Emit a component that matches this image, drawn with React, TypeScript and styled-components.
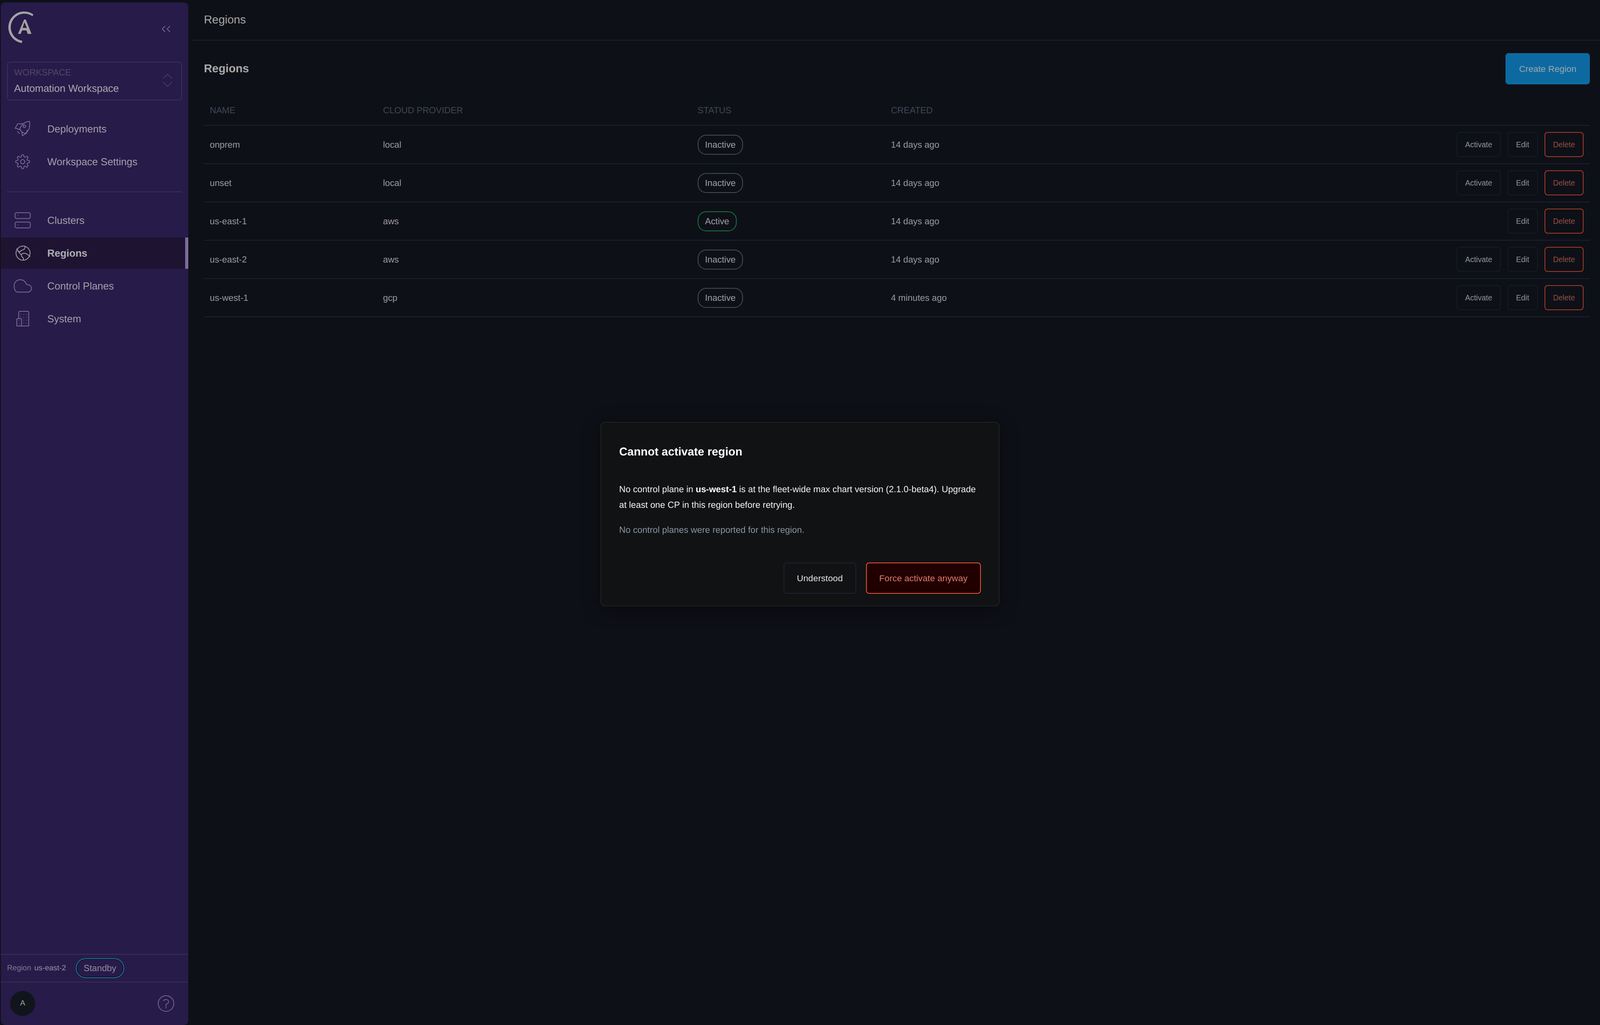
import React from "react";
import styled, { createGlobalStyle } from "styled-components";

const GlobalStyle = createGlobalStyle`
  html, body { margin: 0; padding: 0; height: 100%; background: #0e1017; }
  body {
    font-family: "Liberation Sans", Arial, sans-serif;
    font-size: 26px;
    text-rendering: geometricPrecision;
    overflow: hidden;
  }
  * { box-sizing: border-box; }
`;

const Shell = styled.div`
  display: flex;
  height: 100vh;
  background: #0e1017;
`;

const Sidebar = styled.aside`
  flex: 0 0 480px;
  margin: 6px 0 0 2px;
  border-radius: 12px;
  background: #271b49;
  display: flex;
  flex-direction: column;
`;

const LogoRow = styled.div`
  height: 152px;
  padding: 22px 42px 0 16px;
  display: flex;
  justify-content: space-between;
  align-items: flex-start;
`;

const CollapseIcon = styled.svg`
  margin-top: 34px;
  fill: none;
  stroke: #75659a;
  stroke-width: 2;
`;

const WorkspaceBox = styled.div`
  height: 99px;
  margin: 0 16px;
  padding: 12px 23px 0 16px;
  border: 2px solid #3b2e5a;
  border-radius: 8px;
  display: flex;
  justify-content: space-between;
  align-items: flex-start;
`;

const WorkspaceText = styled.div`
  display: flex;
  flex-direction: column;
  gap: 11px;
`;

const WorkspaceLabel = styled.span`
  font-size: 22.75px;
  line-height: 26px;
  color: #504666;
  text-transform: uppercase;
`;

const WorkspaceName = styled.span`
  font-size: 26px;
  line-height: 34px;
  color: #a9a5ae;
`;

const CaretIcon = styled.svg`
  margin-top: 17px;
  fill: none;
  stroke: #473b65;
  stroke-width: 2;
`;

const NavGroup = styled.nav<{ $top: number }>`
  margin-top: ${(p) => p.$top}px;
  display: flex;
  flex-direction: column;
  gap: 4px;
`;

const NavItem = styled.a<{ $active?: boolean }>`
  position: relative;
  height: 80px;
  padding-left: 32px;
  display: flex;
  align-items: center;
  gap: 39px;
  font-size: 26px;
  font-weight: ${(p) => (p.$active ? 700 : 400)};
  color: ${(p) => (p.$active ? "#aeabb2" : "#a09ca8")};
  background: ${(p) => (p.$active ? "#1e1432" : "transparent")};
  ${(p) =>
    p.$active &&
    `&::after {
      content: "";
      position: absolute;
      top: 0;
      right: 0;
      bottom: 0;
      width: 8px;
      background: #7c6c9c;
    }`}
`;

const NavIcon = styled.svg<{ $active?: boolean }>`
  flex: 0 0 48px;
  fill: none;
  stroke: ${(p) => (p.$active ? "#a09ca8" : "#7a6a9b")};
  stroke-width: 2;
  stroke-linecap: round;
  stroke-linejoin: round;
`;

const Dot = styled.circle`
  fill: #7a6a9b;
  stroke: none;
`;

const Divider = styled.hr`
  height: 2px;
  margin: 36px 16px 0;
  border: 0;
  background: #3b2e5a;
`;

const SidebarFooter = styled.div`
  margin-top: auto;
  display: flex;
  flex-direction: column;
`;

const RegionRow = styled.div`
  height: 71px;
  padding-left: 16px;
  border-top: 2px solid #3b2e5a;
  display: flex;
  align-items: center;
  font-size: 19.5px;
`;

const RegionLabel = styled.span`
  color: #7e7590;
  margin-right: 8px;
`;

const RegionValue = styled.span`
  color: #96919f;
  margin-right: 25px;
`;

const StandbyPill = styled.span`
  height: 51px;
  padding: 0 18px;
  border: 2px solid #18749f;
  border-radius: 26px;
  box-shadow: inset 0 0 0 2px #13131f;
  display: inline-flex;
  align-items: center;
  font-size: 22.75px;
  color: #8f8a9b;
`;

const UserRow = styled.div`
  height: 111px;
  padding: 0 33px 2px 24px;
  border-top: 2px solid #3b2e5a;
  display: flex;
  justify-content: space-between;
  align-items: center;
`;

const Avatar = styled.div`
  width: 64px;
  height: 64px;
  border-radius: 50%;
  background: #10151b;
  color: #a3a3a3;
  font-size: 19.5px;
  display: flex;
  align-items: center;
  justify-content: center;
`;

const HelpIcon = styled.svg`
  fill: none;
  stroke: #75659a;
  stroke-width: 2;
  stroke-linecap: round;
`;

const Main = styled.main`
  flex: 1;
  min-width: 0;
  margin-left: 8px;
  display: flex;
  flex-direction: column;
`;

const TopBar = styled.header`
  height: 104px;
  padding: 0 32px;
  border-bottom: 2px solid #1b222e;
  display: flex;
  align-items: center;
  font-size: 29.25px;
  color: #a7a7a7;
`;

const Content = styled.section`
  padding: 32px 26px 0 32px;
`;

const TitleRow = styled.div`
  display: flex;
  justify-content: space-between;
  align-items: center;
  margin-bottom: 28px;
`;

const PageTitle = styled.h1`
  margin: 0;
  font-size: 29.25px;
  font-weight: 700;
  color: #a8a8a8;
`;

const PrimaryButton = styled.button`
  width: 216px;
  height: 80px;
  border: 0;
  border-radius: 8px;
  background: #0d6aa1;
  color: #9aa5ad;
  font: inherit;
  font-size: 22.75px;
`;

/* Column shares are the reference's 570 / 1035 / 636 / 2319 px of its 4560 px table,
   so they land on the same pixels in a 5108 px window and scale in a narrower one. */
const TableRow = styled.div<{ $head?: boolean }>`
  height: ${(p) => (p.$head ? 78 : 98)}px;
  border-bottom: 2px solid #1b222e;
  display: grid;
  grid-template-columns: minmax(0, 570fr) minmax(0, 1035fr) minmax(0, 636fr) minmax(0, 2319fr);
  align-items: center;
  font-size: 22.75px;
  color: ${(p) => (p.$head ? "#3e4653" : "#97979b")};
`;

const TableCell = styled.div`
  padding-left: 15px;
`;

const CreatedCell = styled.div`
  padding: 0 16px 0 15px;
  display: flex;
  align-items: center;
  justify-content: space-between;
`;

const Badge = styled.span<{ $active: boolean }>`
  height: 51px;
  padding: 0 17px;
  border: 2px solid ${(p) => (p.$active ? "#14793f" : "#454c58")};
  border-radius: 22px;
  display: inline-flex;
  align-items: center;
  color: #9a9da3;
`;

const Actions = styled.div`
  display: flex;
  gap: 17px;
`;

const RowButton = styled.button<{ $danger?: boolean }>`
  height: 64px;
  padding: 0 20px;
  border: 2px solid ${(p) => (p.$danger ? "#a33b2b" : "#141c24")};
  border-radius: 8px;
  background: transparent;
  color: ${(p) => (p.$danger ? "#8e4f45" : "#8e9094")};
  font: inherit;
  font-size: 19.5px;
`;

const Overlay = styled.div`
  position: fixed;
  inset: 0;
  padding-top: 8px;
  display: flex;
  align-items: center;
  justify-content: center;
`;

const Dialog = styled.div`
  width: 1022px;
  height: 472px;
  padding: 46px 46px 30px;
  border: 2px solid #1e2226;
  border-radius: 12px;
  background: #111213;
  box-shadow: 0 8px 48px rgba(0, 0, 0, 0.45);
  display: flex;
  flex-direction: column;
`;

const DialogTitle = styled.h2`
  margin: 0 0 47px;
  font-size: 29.25px;
  line-height: 58px;
  font-weight: 700;
  color: #fff;
`;

const DialogText = styled.p<{ $muted?: boolean }>`
  margin: 0 0 24px;
  font-size: 22.75px;
  line-height: 39.8px;
  color: ${(p) => (p.$muted ? "#8b95a5" : "#f2f2f2")};
  b { font-weight: 700; color: #fff; }
`;

const DialogActions = styled.div`
  margin-top: auto;
  display: flex;
  justify-content: flex-end;
  gap: 25px;
`;

const DialogButton = styled.button<{ $danger?: boolean }>`
  height: 80px;
  padding: 0 32px;
  border: 2px solid ${(p) => (p.$danger ? "#e9523e" : "#1b2230")};
  border-radius: 8px;
  background: ${(p) => (p.$danger ? "#210000" : "transparent")};
  color: ${(p) => (p.$danger ? "#e37b6e" : "#e2e2e2")};
  font: inherit;
  font-size: 22.75px;
`;

const gearPath = (() => {
  const pts: string[] = [];
  const n = 160;
  for (let i = 0; i < n; i++) {
    const t = (i / n) * Math.PI * 2;
    const r = 15.3 + 2.6 * Math.tanh(2.2 * Math.cos(8 * t));
    const x = 24 + r * Math.sin(t);
    const y = 24 - r * Math.cos(t);
    pts.push(`${x.toFixed(2)} ${y.toFixed(2)}`);
  }
  return `M${pts.join("L")}Z`;
})();

const RocketIcon = () => (
  <NavIcon width="48" height="48" viewBox="0 0 48 48">
    <path d="M41.7 4.7C35 5 30 7 26 10.7C21.5 15 18.5 19 17 23.3C17.5 26.5 19 29 21.7 31.3C24.5 33.5 27 35 30.3 35.7C34.5 33.5 38 29 41 22.3C42.5 16 42.5 10 41.7 4.7Z" />
    <path d="M26 10.7L11 11.3L5 22.3L17 25.7" />
    <path d="M22 32L23.3 41.3L34.3 34.7L35.3 27" />
    <circle cx="28.3" cy="17.3" r="3.3" />
    <path d="M11 30.7L16 35.7" />
  </NavIcon>
);

const GearIcon = () => (
  <NavIcon width="48" height="48" viewBox="0 0 48 48">
    <path d={gearPath} />
    <circle cx="24" cy="24" r="5.4" />
  </NavIcon>
);

const DrivesIcon = () => (
  <NavIcon width="48" height="48" viewBox="0 0 48 48">
    <rect x="4.5" y="4.5" width="39" height="15" rx="4" />
    <rect x="4.5" y="28.5" width="39" height="15" rx="4" />
    <Dot cx="11.7" cy="11.7" r="1" />
    <Dot cx="11.7" cy="35.7" r="1" />
  </NavIcon>
);

const GlobeIcon = () => (
  <NavIcon $active width="48" height="48" viewBox="0 0 48 48">
    <circle cx="25" cy="24" r="18" />
    <path d="M9.3 12.7L12.7 19.3L17.7 20.3C19 17 24 16 27.7 14.3C29.5 12 30 9 30.3 6.3" />
    <path d="M12.7 19.3L20.3 28.3C22 26 25 24.3 27.7 24.3C31 24.3 33 25 36 27L42.7 32.7" />
    <path d="M20.3 28.3L21.7 32.7L26 37L26 41.7" />
  </NavIcon>
);

const CloudIcon = () => (
  <NavIcon width="48" height="48" viewBox="0 0 48 48">
    <path d="M11.5 39.7H37C43 39.7 46.5 35 46.5 30C46.5 24.5 41 20.5 34 20.5C31 12.5 25 8 18 8C9 8 2.2 15 2.2 24C2.2 33 5.5 39.7 11.5 39.7Z" />
  </NavIcon>
);

const BuildingIcon = () => (
  <NavIcon width="48" height="48" viewBox="0 0 48 48">
    <path d="M14 23.7V7.5C14 6 15 5 16.5 5H37C38.5 5 39.5 6 39.5 7.5V42.5H9V26C9 24.5 10 23.7 11.5 23.7H18.5C20 23.7 21 24.5 21 26V42.5" />
    {[19.3, 26.7, 33.7].map((x) => [13, 20.3].map((y) => <Dot key={`${x}-${y}`} cx={x} cy={y} r="1" />))}
    {[26.7, 33.7].map((x) => [27.7, 35].map((y) => <Dot key={`${x}-${y}`} cx={x} cy={y} r="1" />))}
    <Dot cx="15" cy="29.3" r="1" />
    <Dot cx="15" cy="36.7" r="1" />
  </NavIcon>
);

const Logo = () => (
  <svg width="70" height="90" viewBox="18 28 70 90">
    <path fill="#a3a3a3" d="M85.5 37A40.5 40.5 0 1 0 56 110L57 104.5A35 35 0 1 1 83 41.5Z" />
    <path
      fill="#a3a3a3"
      fillRule="evenodd"
      d="M46 86.7L61.7 50H66L80.7 86.7H70.7L67.7 77.7H56.7L52.7 86.7ZM62.5 57L58 71.5H69Z"
    />
  </svg>
);

type Region = { name: string; cloud: string; active: boolean; created: string };

const regions: Region[] = [
  { name: "onprem", cloud: "local", active: false, created: "14 days ago" },
  { name: "unset", cloud: "local", active: false, created: "14 days ago" },
  { name: "us-east-1", cloud: "aws", active: true, created: "14 days ago" },
  { name: "us-east-2", cloud: "aws", active: false, created: "14 days ago" },
  { name: "us-west-1", cloud: "gcp", active: false, created: "4 minutes ago" },
];

export default function App() {
  return (
    <>
      <GlobalStyle />
      <Shell>
        <Sidebar>
          <LogoRow>
            <Logo />
            <CollapseIcon width="28" height="24" viewBox="412 62 28 24">
              <path d="M422.7 66.7L415.3 74L422.7 81.7" />
              <path d="M435.3 66.7L427.7 74L435.3 81.7" />
            </CollapseIcon>
          </LogoRow>
          <WorkspaceBox>
            <WorkspaceText>
              <WorkspaceLabel>Workspace</WorkspaceLabel>
              <WorkspaceName>Automation Workspace</WorkspaceName>
            </WorkspaceText>
            <CaretIcon width="24" height="34" viewBox="0 0 24 34">
              <path d="M.7 12L12 1L24 12" />
              <path d="M.7 20.7L12 32.3L24 20.7" />
            </CaretIcon>
          </WorkspaceBox>
          <NavGroup $top={33}>
            <NavItem>
              <RocketIcon />
              Deployments
            </NavItem>
            <NavItem>
              <GearIcon />
              Workspace Settings
            </NavItem>
          </NavGroup>
          <Divider />
          <NavGroup $top={32}>
            <NavItem>
              <DrivesIcon />
              Clusters
            </NavItem>
            <NavItem $active>
              <GlobeIcon />
              Regions
            </NavItem>
            <NavItem>
              <CloudIcon />
              Control Planes
            </NavItem>
            <NavItem>
              <BuildingIcon />
              System
            </NavItem>
          </NavGroup>
          <SidebarFooter>
            <RegionRow>
              <RegionLabel>Region</RegionLabel>
              <RegionValue>us-east-2</RegionValue>
              <StandbyPill>Standby</StandbyPill>
            </RegionRow>
            <UserRow>
              <Avatar>A</Avatar>
              <HelpIcon width="48" height="48" viewBox="0 0 48 48">
                <circle cx="24" cy="24" r="20" />
                <path d="M17.3 16.3C19 14.5 21.5 13.7 24 13.7C28 13.7 30.7 16.3 30.7 19.7C30.7 23 27.5 24.5 24 26.3V31" />
                <circle cx="24" cy="34.7" r="0.6" />
              </HelpIcon>
            </UserRow>
          </SidebarFooter>
        </Sidebar>
        <Main>
          <TopBar>Regions</TopBar>
          <Content>
            <TitleRow>
              <PageTitle>Regions</PageTitle>
              <PrimaryButton>Create Region</PrimaryButton>
            </TitleRow>
            <TableRow $head>
              <TableCell>NAME</TableCell>
              <TableCell>CLOUD PROVIDER</TableCell>
              <TableCell>STATUS</TableCell>
              <TableCell>CREATED</TableCell>
            </TableRow>
            {regions.map((r) => (
              <TableRow key={r.name}>
                <TableCell>{r.name}</TableCell>
                <TableCell>{r.cloud}</TableCell>
                <TableCell>
                  <Badge $active={r.active}>{r.active ? "Active" : "Inactive"}</Badge>
                </TableCell>
                <CreatedCell>
                  <span>{r.created}</span>
                  <Actions>
                    {!r.active && <RowButton>Activate</RowButton>}
                    <RowButton>Edit</RowButton>
                    <RowButton $danger>Delete</RowButton>
                  </Actions>
                </CreatedCell>
              </TableRow>
            ))}
          </Content>
        </Main>
        <Overlay>
          <Dialog>
            <DialogTitle>Cannot activate region</DialogTitle>
            <DialogText>
              No control plane in <b>us-west-1</b> is at the fleet-wide max chart version (2.1.0-beta4). Upgrade at least one CP in this region before retrying.
            </DialogText>
            <DialogText $muted>No control planes were reported for this region.</DialogText>
            <DialogActions>
              <DialogButton>Understood</DialogButton>
              <DialogButton $danger>Force activate anyway</DialogButton>
            </DialogActions>
          </Dialog>
        </Overlay>
      </Shell>
    </>
  );
}
